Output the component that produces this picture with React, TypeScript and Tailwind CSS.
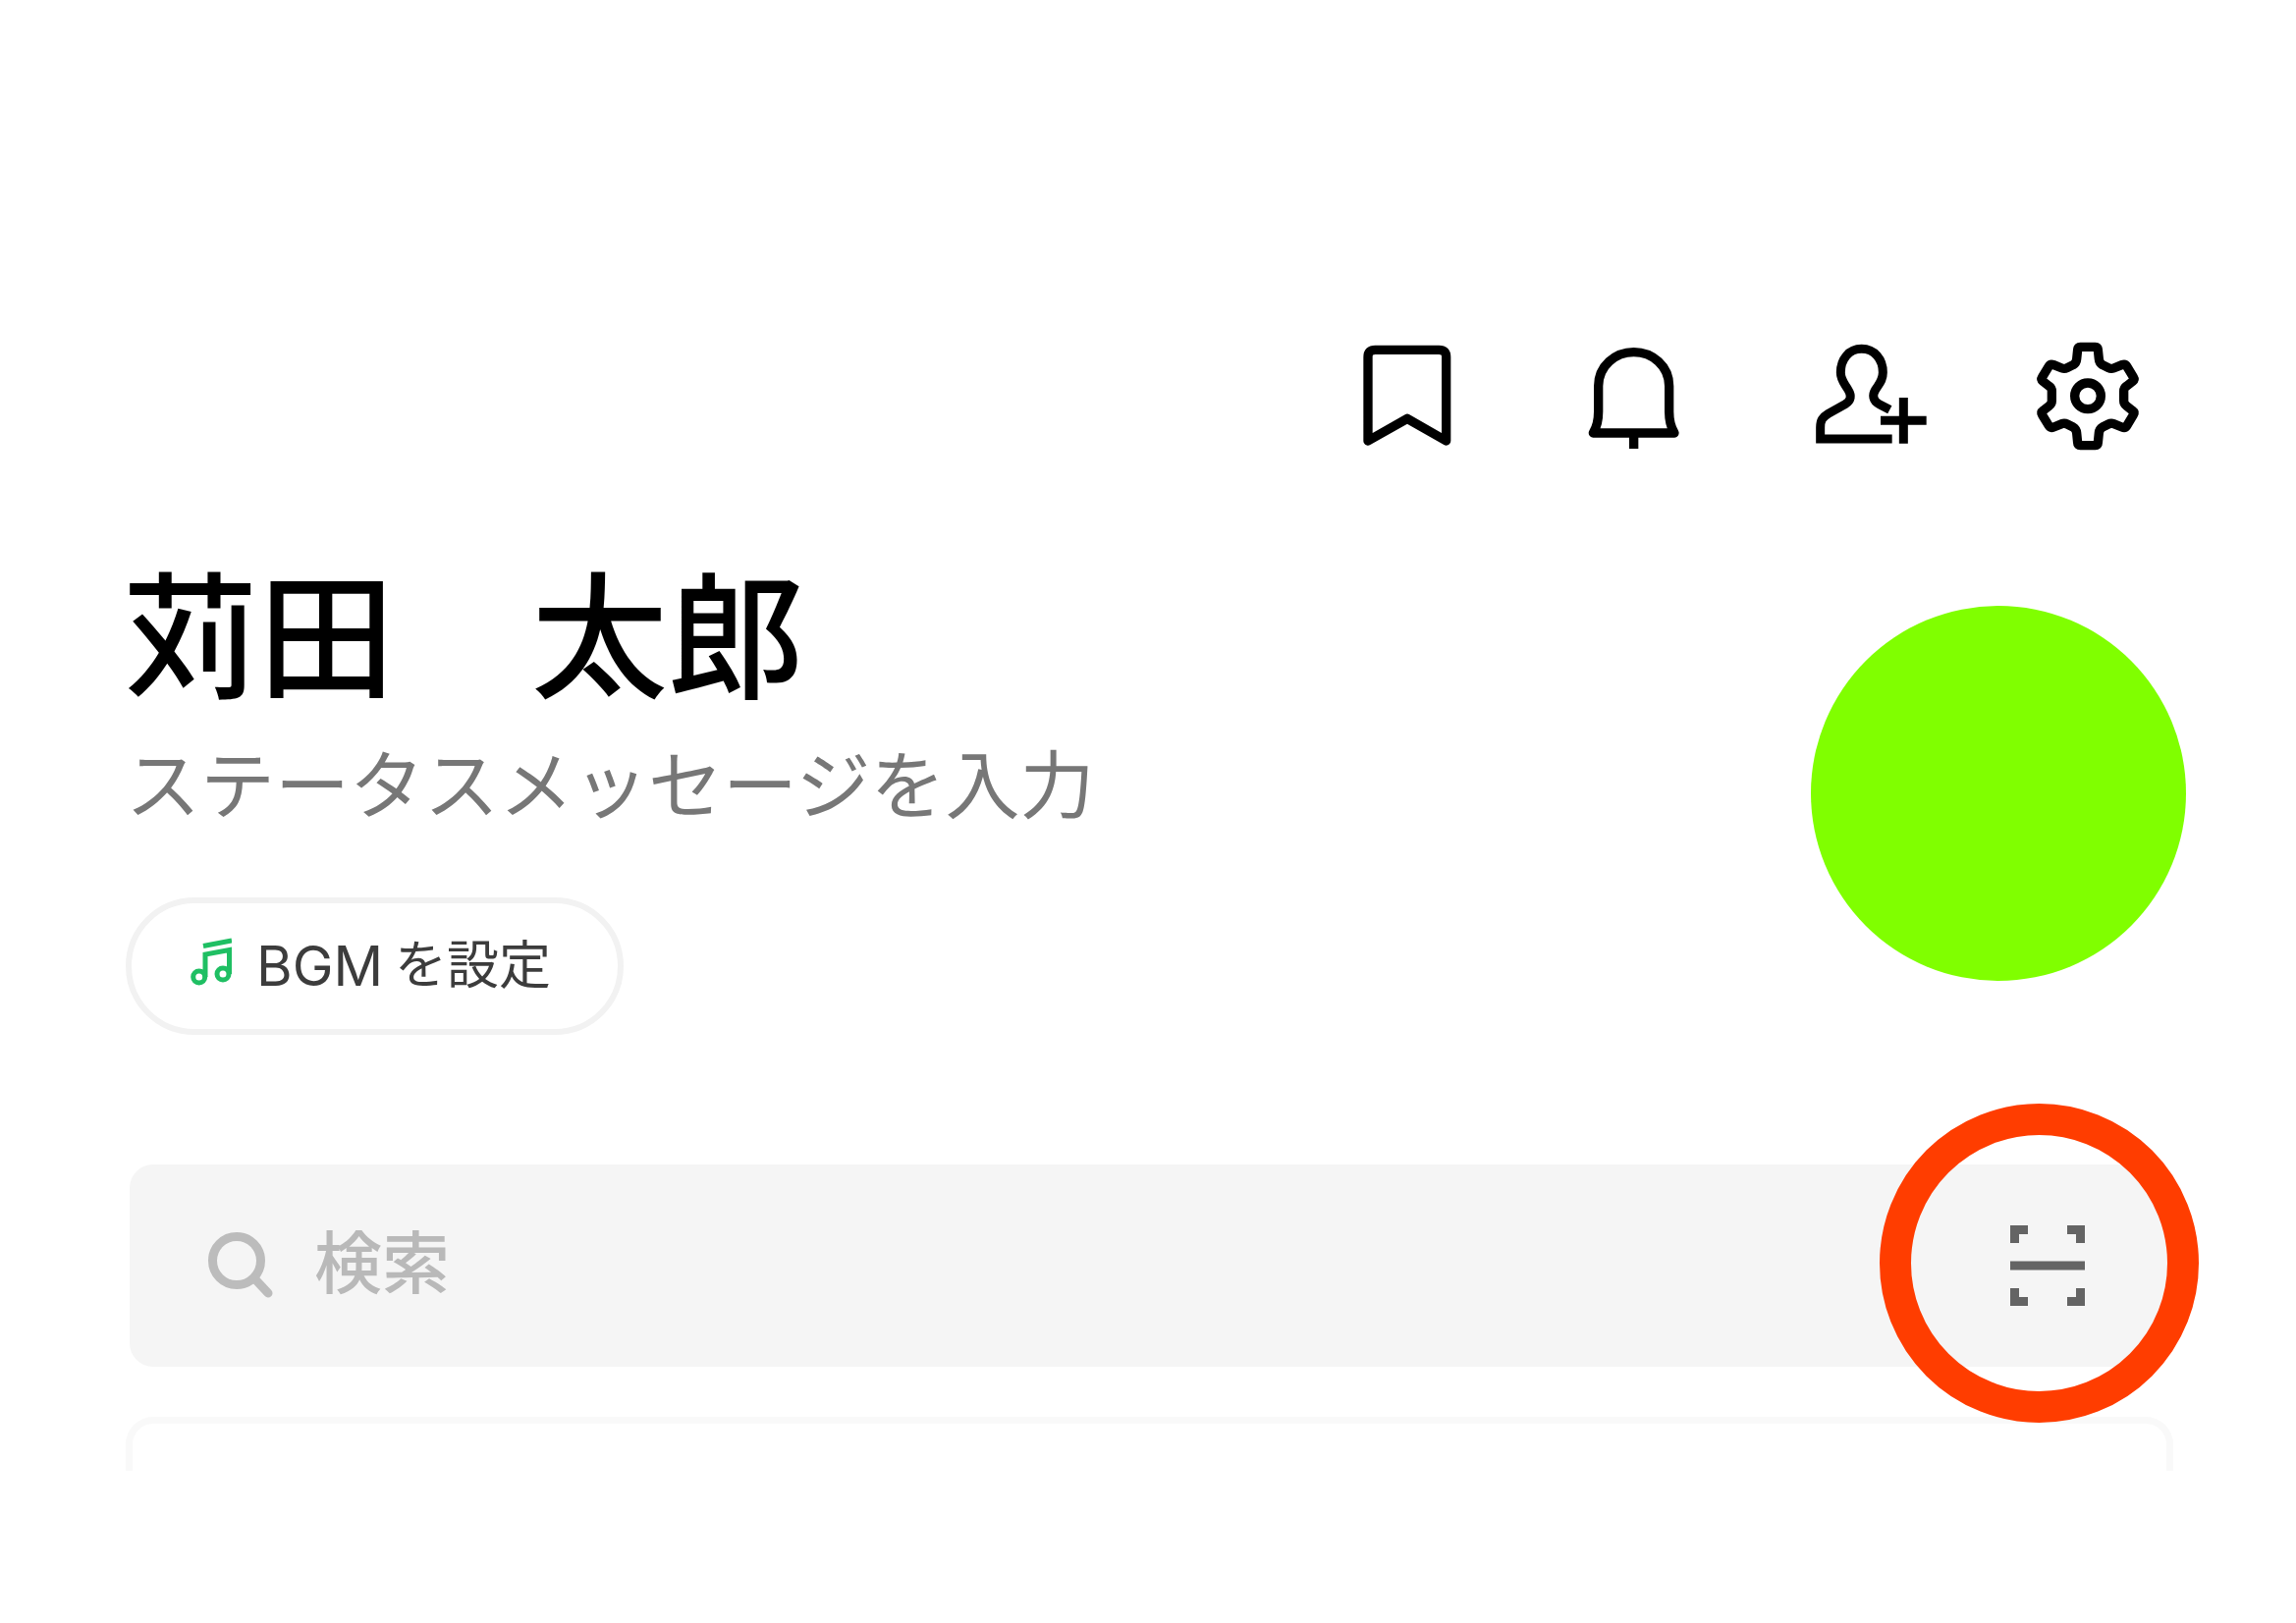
type IconProps = { className?: string };

const BookmarkIcon = ({ className }: IconProps) => (
  <svg viewBox="0 0 360 360" fill="none" stroke="currentColor" strokeWidth={28} className={className}>
    <path d="M60 327V71Q60 49 82 49H277Q299 49 299 71V327L180 259Z" strokeLinejoin="round" />
  </svg>
);

const BellIcon = ({ className }: IconProps) => (
  <svg viewBox="0 0 360 360" fill="none" stroke="currentColor" strokeWidth={28} className={className}>
    <path
      d="M55 303C68 282 71 262 71 238V160C71 98 122 56 179 56S287 98 287 160V238C287 262 290 282 303 303Z"
      strokeLinejoin="round"
    />
    <path d="M179 303V351" />
  </svg>
);

const AddFriendIcon = ({ className }: IconProps) => (
  <svg viewBox="0 0 360 360" fill="none" stroke="currentColor" strokeWidth={27} className={className}>
    <path d="M268 232L236 215C216 205 214 187 224 171C236 152 247 142 247 118C247 78 221 46 182 46S118 78 118 118C118 142 130 152 141 171C152 189 150 204 132 215L80 244C62 255 56 264 56 286V321H275" />
    <path d="M240 265H380M310 195V335" />
  </svg>
);

const GearIcon = ({ className }: IconProps) => (
  <svg viewBox="0 0 360 360" fill="none" stroke="currentColor" strokeWidth={28} strokeLinejoin="round" className={className}>
    <path d="M157 40Q149 40 149 48L146 77Q145 89 135 95L117 104Q109 108 101 105L76 95Q66 91 61 99L41 132Q36 140 43 145L62 160Q70 166 70 175V205Q70 214 62 220L43 235Q36 240 41 248L61 281Q66 289 76 285L101 275Q109 272 117 276L135 285Q145 291 146 303L149 333Q149 341 157 341H203Q211 341 211 333L214 303Q215 291 225 285L243 276Q251 272 259 275L284 285Q294 289 299 281L319 248Q324 240 317 235L298 220Q290 214 290 205V175Q290 166 298 160L317 145Q324 140 319 132L299 99Q294 91 284 95L259 105Q251 108 243 104L225 95Q215 89 214 77L211 48Q211 40 203 40Z" />
    <circle cx="180" cy="190" r="40" />
  </svg>
);

const MusicIcon = ({ className }: IconProps) => (
  <svg viewBox="0 0 42 50" fill="none" stroke="currentColor" strokeWidth={5} className={className}>
    <path d="M13 8.500L42 3" />
    <path d="M15 40V17L39.500 12.500V37" />
    <circle cx="8.700" cy="40" r="6" />
    <circle cx="33" cy="37" r="6" />
  </svg>
);

const SearchIcon = ({ className }: IconProps) => (
  <svg viewBox="0 0 66 68" fill="none" stroke="currentColor" strokeWidth={9} className={className}>
    <circle cx="29" cy="29" r="24.500" />
    <path d="M47 47L61 62" strokeLinecap="round" />
  </svg>
);

const ScanIcon = ({ className }: IconProps) => (
  <svg viewBox="0 0 76 82" fill="none" stroke="currentColor" strokeWidth={9} className={className}>
    <path d="M4.500 18V4.500H18M58 4.500H71.500V18M71.500 64V77.500H58M18 77.500H4.500V64" />
    <path d="M0 41H76" />
  </svg>
);

const actions = [
  { label: "Keep", Icon: BookmarkIcon },
  { label: "お知らせ", Icon: BellIcon },
  { label: "友だち追加", Icon: AddFriendIcon },
  { label: "設定", Icon: GearIcon },
];

const App = () => {
  return (
    <div className="min-h-screen bg-white pl-32 pr-[125px] pt-[340px] font-['Inter','Noto_Sans_CJK_JP',sans-serif]">
      {/* Header actions */}
      <header className="flex justify-end gap-[111px] pr-[27px]">
        {actions.map(({ label, Icon }) => (
          <button key={label} type="button" aria-label={label} className="size-[120px]">
            <Icon className="size-[120px] overflow-visible" />
          </button>
        ))}
      </header>

      <main>
        {/* Profile */}
        <section className="flex items-start justify-between pt-[98px]">
          <div>
            <h1 className="-ml-1 whitespace-pre text-[139px] font-medium leading-[184px] text-black">苅田　太郎</h1>
            <p className="mt-1 text-[76px] leading-[108px] text-[#777777]">ステータスメッセージを入力</p>
            <button
              type="button"
              className="mt-[60px] flex h-[140px] items-center rounded-full border-[6px] border-[#f2f2f2] pl-[60px] pr-[68px] text-[53px] text-[#3c3c3c]"
            >
              <MusicIcon className="mb-2 mr-[25px] h-[50px] w-[42px] text-[#1fbf63]" />
              <span className="mr-3 text-[56px]">BGM</span>
              <span>を設定</span>
            </button>
          </div>
          <div className="mr-[-13px] mt-[59px] size-[382px] shrink-0 rounded-full bg-[#80ff00]" />
        </section>

        {/* Search */}
        <div className="relative mx-1 mt-[132px] flex h-[206px] items-center gap-[42px] rounded-3xl bg-[#f5f5f5] pl-20 pr-[86px]">
          <SearchIcon className="h-[68px] w-[66px] shrink-0 text-[#bcbcbc]" />
          <input
            type="search"
            aria-label="検索"
            placeholder="検索"
            className="mb-1 min-w-0 flex-1 bg-transparent text-[69px] font-medium leading-[100px] outline-none placeholder:text-[#b9b9b9]"
          />
          <button type="button" aria-label="QRコードリーダー" className="shrink-0 text-[#646464]">
            <ScanIcon className="h-[82px] w-[76px]" />
          </button>
          {/* Highlight around the scan button */}
          <div className="pointer-events-none absolute -right-[30px] -top-[62px] size-[325px] rounded-full border-[32px] border-[#ff3d00]" />
        </div>

        <div className="mt-[51px] h-[55px] rounded-t-[28px] border-x-[7px] border-t-[7px] border-[#f9f9f9]" />
      </main>
    </div>
  );
};

export default App;
